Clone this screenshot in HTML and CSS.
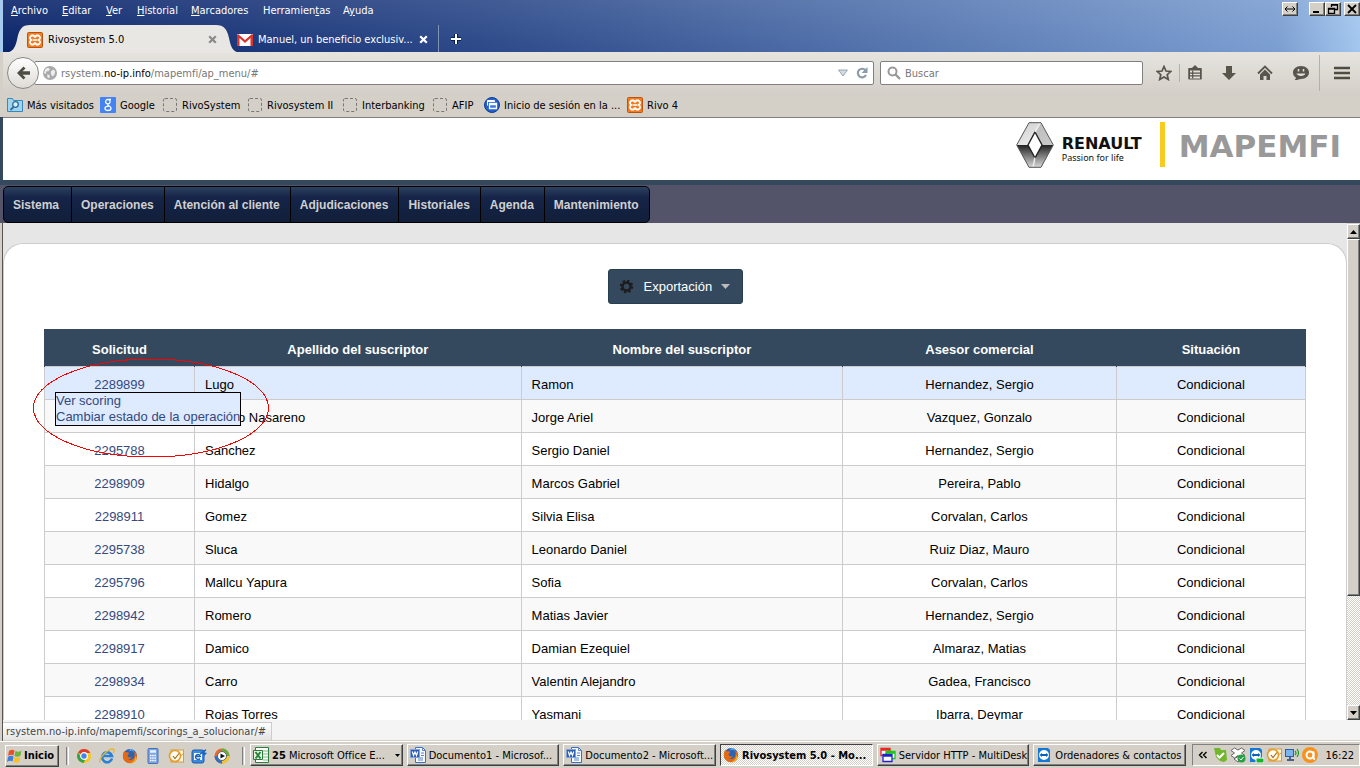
FILE: index.html
```html
<!DOCTYPE html>
<html lang="es">
<head>
<meta charset="utf-8">
<title>Rivosystem 5.0</title>
<link rel="stylesheet" href="styles.css">
</head>
<body>
<svg class="defs" aria-hidden="true">
  <symbol id="xampp" viewBox="0 0 16 16"><rect x=".5" y=".5" width="15" height="15" rx="1" fill="#f57a20" stroke="#b9540f"/><path d="M4.500 3.500h2L8 5l1.500-1.500h2l1.500 1.500v1.500L11.800 8 13 9.500V11l-1.500 1.500h-2L8 11l-1.500 1.500h-2L3 11V9.500L4.200 8 3 6.500V5z" fill="none" stroke="#fff" stroke-width="1.800"/><path d="M5.500 8h5" stroke="#fff" stroke-width="1.600"/></symbol>
  <symbol id="blank" viewBox="0 0 16 16"><rect x="1.500" y="1.500" width="13" height="13" rx="1.500" fill="none" stroke="#777" stroke-dasharray="3 2"/></symbol>
  <symbol id="firefox" viewBox="0 0 16 16"><circle cx="8" cy="8" r="7" fill="#2b63b5"/><path d="M8 1c3 0 4 2 4 3-2-2-4-1-5 0z" fill="#5da8e8"/><path d="M1.500 4 3 3l1 1.500c2-.5 3 .2 3 1L5.500 7.500C6 9.500 8 10 10 9c-1 2-3 3-5 2 3 2 7 1 7.500-3 .5-2 0-3-1-4.500 3 1 4 4 3.300 6.500C14 13.500 11 15.500 8 15.300 3.500 15 .5 11.500.8 7.500z" fill="#e66a12"/><path d="M14.800 10C14 13.500 11 15.500 8 15.300c3-1 5-3 5.500-7z" fill="#f5b51d"/></symbol>
  <symbol id="word" viewBox="0 0 16 16"><path d="M5.500.5h7l3 3v12h-10z" fill="#f4f8ff" stroke="#3f6fb8"/><path d="M12.500.5v3h3M8 11h5M8 13h5M11 6h3M11 8.500h3" fill="none" stroke="#5b86c8"/><rect x=".5" y="2.500" width="9" height="8" fill="#2b5cb0" stroke="#7ea1dd"/><path d="m2.300 4.500 1.200 4 1.500-3.500 1.500 3.500 1.200-4" fill="none" stroke="#fff" stroke-width="1.200"/></symbol>
  <symbol id="outlook" viewBox="0 0 16 16"><rect x="3" y="2" width="12.500" height="12" fill="#fff6d5" stroke="#d39c34"/><path d="m3 6 6 5 6-5" fill="none" stroke="#d9a441"/><circle cx="7" cy="8" r="5.500" fill="#fffdf4" stroke="#e79b2b" stroke-width="1.600"/><path d="m5 8 2 2.500 4-5" fill="none" stroke="#a66c15" stroke-width="1.200"/></symbol>
  <symbol id="viewer" viewBox="0 0 16 16"><path d="M2 1h10l2 2v12H2z" fill="#1478d4"/><circle cx="8" cy="8" r="5" fill="#fff"/><path d="M3.500 8 6 6v1h4V6l2.500 2L10 10V9H6v1z" fill="#0b5fb5"/></symbol>
  <symbol id="closex" viewBox="0 0 9 9"><path d="m1.200 1.200 6.600 6.600m0-6.600L1.200 7.800" stroke="currentColor" stroke-width="2.200"/></symbol>
</svg>
<div class="desktop">
  <div class="window">
    <div class="edge"></div>
    <div class="browser">
      <header class="titlebar">
        <div class="top-row">
          <nav class="menubar">
            <a href="#"><u>A</u>rchivo</a><a href="#"><u>E</u>ditar</a><a href="#"><u>V</u>er</a><a href="#"><u>H</u>istorial</a><a href="#"><u>M</u>arcadores</a><a href="#">Herramien<u>t</u>as</a><a href="#">A<u>y</u>uda</a>
          </nav>
          <div class="controls">
            <button class="bevel ctl first" aria-label="Mover"><svg viewBox="0 0 12 10"><path d="M1 5h10M3.500 2.500 1 5l2.500 2.500m5-5L11 5 8.500 7.500" fill="none" stroke="#000"/></svg></button>
            <button class="bevel ctl" aria-label="Minimizar"><svg viewBox="0 0 12 10"><path d="M2 8h6" stroke="#000" stroke-width="2"/></svg></button>
            <button class="bevel ctl third" aria-label="Restaurar"><svg viewBox="0 0 12 10"><path d="M4.500 3V.5h6v5H8M4 1h7M1.500 4.500h6v5h-6zM1 5h7" fill="none" stroke="#000" stroke-width="1.300"/></svg></button>
            <button class="bevel ctl" aria-label="Cerrar"><svg viewBox="0 0 12 10"><path d="m2 1 8 8m0-8L2 9" stroke="#000" stroke-width="1.800"/></svg></button>
          </div>
        </div>
        <div class="tabs">
          <div class="tab active">
            <svg class="tab-shape" viewBox="0 0 236 28" preserveAspectRatio="none"><path d="M0 28c8-1 10-5 12-13C14 4 17 0 25 0h186c8 0 11 4 13 13 2 10 4 14 12 15z" fill="#e9e7e3"/></svg>
            <svg class="ico"><use href="#xampp"/></svg><span class="tab-name">Rivosystem 5.0</span>
            <button class="tab-close" aria-label="Cerrar pestaña"><svg><use href="#closex"/></svg></button>
          </div>
          <div class="tab">
            <svg class="ico" viewBox="0 0 16 16"><rect y="2" width="16" height="12" rx="1" fill="#fff"/><path d="M0 3v11h2.500V6L8 11l5.500-5v8H16V3l-1-1L8 8 1 2z" fill="#d9342b"/></svg><span class="tab-name">Manuel, un beneficio exclusiv...</span>
            <button class="tab-close" aria-label="Cerrar pestaña"><svg><use href="#closex"/></svg></button>
          </div>
          <button class="newtab" aria-label="Nueva pestaña"><svg viewBox="0 0 12 12"><path d="M6 1v10M1 6h10" stroke="#001c50" stroke-width="4"/><path d="M6 1v10M1 6h10" stroke="#fff" stroke-width="2"/></svg></button>
        </div>
      </header>
      <div class="chrome">
        <div class="toolbar">
          <button class="back" aria-label="Atrás"><svg viewBox="0 0 16 16"><path d="M8.500 1.500 2 8l6.500 6.500 2-2L7.500 9.700H15V6.300H7.500l3-2.800z" fill="#4d4d44"/></svg></button>
          <div class="url">
            <svg class="globe" viewBox="0 0 16 16"><circle cx="8" cy="8" r="8" fill="#a9a9a9"/><path d="m3 3 3-1 2 2-2 2H4l-1 3-2-1zM9 6l3-2 2 2-1 4-2 2-2-3zM5 9l3 2-1 3-2-1z" fill="#eee"/></svg>
            <div class="address" role="textbox" aria-label="Dirección" contenteditable="true">rsystem.<b>no-ip.info</b>/mapemfi/ap_menu/#</div>
            <svg class="drop" viewBox="0 0 10 8"><path d="M.5 1h9L5 7z" fill="#d3dbe0" stroke="#9aa8b3"/></svg>
            <svg class="reload" viewBox="0 0 12 12"><path d="M9.500 3.300A4.300 4.300 0 1 0 10 8" fill="none" stroke="#8d9cab" stroke-width="2.200"/><path d="M11.500 0v6h-6z" fill="#8d9cab"/></svg>
          </div>
          <label class="search"><svg viewBox="0 0 14 14"><circle cx="5.500" cy="5.500" r="4" fill="none" stroke="#999" stroke-width="2"/><path d="m8.500 8.500 4.500 4.500" stroke="#999" stroke-width="2.400"/></svg><input type="text" placeholder="Buscar" aria-label="Buscar"></label>
          <div class="actions">
            <button aria-label="Marcar"><svg viewBox="0 0 16 16"><path d="m8 1.500 2 4.500 4.800.500-3.600 3.200 1.100 4.800L8 12l-4.300 2.500 1.100-4.800L1.200 6.500 6 6z" fill="none" stroke="#56564c" stroke-width="1.700"/></svg></button>
            <span class="sep"></span>
            <button aria-label="Lista"><svg viewBox="0 0 16 16"><path d="M2 3.800h12v10H2zM5.500 3.500 8 1l2.500 2.500z" fill="#56564c" stroke="#56564c" stroke-width="1.500" stroke-linejoin="round"/><path d="M3 5.500h10v8H3z" fill="#e4e1dc"/><path d="M3 8.200h10M3 10.900h10M5.700 5.500v8" stroke="#56564c" stroke-width="1.200"/></svg></button>
            <button aria-label="Descargas"><svg viewBox="0 0 16 16"><path d="M5 1h6v7h4l-7 7-7-7h4z" fill="#56564c"/></svg></button>
            <button aria-label="Inicio"><svg viewBox="0 0 16 16"><path d="m1 8.500 7-7 7 7" fill="none" stroke="#56564c" stroke-width="1.800"/><path d="M3 9.500 8 4.500l5 5V15H9.500v-4h-3v4H3z" fill="#56564c"/></svg></button>
            <button aria-label="Chat"><svg viewBox="0 0 16 16"><path d="M8 1c5 0 8 3 8 6.500S13 14 8 14c-2 0-4 1.500-6.500 1 1-.8 1.500-1.500 1.300-2.500C1 11.500 0 9.500 0 7.500 0 4 3 1 8 1z" fill="#56564c"/><path d="M5.500 4v2.500m5-2.500v2.500" stroke="#e4e1dc" stroke-width="1.500"/><path d="M3.500 8.500h9c-1 3.200-8 3.200-9 0z" fill="#e4e1dc"/></svg></button>
            <span class="sep tall"></span>
            <button aria-label="Menú"><svg viewBox="0 0 16 16"><path d="M0 3h16M0 8h16M0 13h16" stroke="#4d4d42" stroke-width="2.600"/></svg></button>
          </div>
        </div>
        <nav class="bookmarks">
          <a href="#"><svg viewBox="0 0 16 16"><path d="M.5 1.500h5l1 2h9v11H.5z" fill="#9fd4f0" stroke="#3989b8"/><circle cx="8.500" cy="7.500" r="2.800" fill="#d8f0fc" stroke="#2f6c96" stroke-width="1.300"/><path d="m6.500 10-3 3" stroke="#2f6c96" stroke-width="1.800"/></svg>Más visitados</a>
          <a href="#"><svg viewBox="0 0 16 16"><rect width="16" height="16" rx="1" fill="#4583f2"/><path d="M11 2.500H7.800a2.200 2.200 0 1 0 0 4.400A2.200 2.200 0 0 0 9 2.800M8 7c-1.500 1.500 3 1.800 3 4.200 0 3-6 3-6 .2 0-1.800 2-2.200 3.800-2.200" fill="none" stroke="#fff" stroke-width="1.300"/></svg>Google</a>
          <a href="#"><svg><use href="#blank"/></svg>RivoSystem</a>
          <a href="#"><svg><use href="#blank"/></svg>Rivosystem II</a>
          <a href="#"><svg><use href="#blank"/></svg>Interbanking</a>
          <a href="#"><svg><use href="#blank"/></svg>AFIP</a>
          <a href="#"><svg viewBox="0 0 16 16"><circle cx="8" cy="8" r="7.500" fill="#2161cf" stroke="#123d91"/><path d="M3.500 8.500v-5h7v1.500M3.500 4.500h7" fill="none" stroke="#fff"/><path d="M5.500 6.500h7v5h-7zM5.500 7.500h7" fill="#3b78db" stroke="#fff" stroke-width="1.300"/></svg>Inicio de sesión en la ...</a>
          <a href="#"><svg><use href="#xampp"/></svg>Rivo 4</a>
        </nav>
      </div>
      <div class="brand">
        <svg class="renault" viewBox="0 0 38 46">
          <defs>
            <linearGradient id="lower" x2="0" y2="1"><stop offset="0" stop-color="#222"/><stop offset="1" stop-color="#d8d8d8"/></linearGradient>
            <linearGradient id="upper" x2="1" y2="1"><stop offset="0" stop-color="#ccc"/><stop offset="1" stop-color="#fafafa"/></linearGradient>
          </defs>
          <path d="M13 .7h12L37.300 23H.7z" fill="url(#upper)"/>
          <path d="M.7 23h36.600L25 45.300H13z" fill="url(#lower)"/>
          <path d="m25 1 12 22H26l-6.500-12z" fill="#aaa" opacity=".6"/>
          <path d="m19 10 7 13-7 13-7-13z" fill="#fff" stroke="#222" stroke-width="1.400"/>
          <path d="M19 35.500 17 45m2-35 5-9" stroke="#eee" stroke-width="1.400"/>
          <path d="M13 .7h12L37.300 23 25 45.300H13L.7 23z" fill="none" stroke="#555"/>
        </svg>
        <div class="renault-text"><strong>RENAULT</strong><span>Passion for life</span></div>
        <div class="rule"></div>
        <div class="mapemfi">MAPEMFI</div>
      </div>
      <div class="mainnav"><nav><a href="#">Sistema</a><a href="#">Operaciones</a><a href="#">Atención al cliente</a><a href="#">Adjudicaciones</a><a href="#">Historiales</a><a href="#">Agenda</a><a href="#">Mantenimiento</a></nav></div>
      <div class="content">
        <main class="panel">
          <button class="export"><svg class="gear" viewBox="0 0 16 16"><circle cx="8" cy="8" r="4.300" fill="none" stroke="#1c1c1c" stroke-width="2.600"/><circle cx="8" cy="8" r="6.200" fill="none" stroke="#1c1c1c" stroke-width="2" stroke-dasharray="2.400 2.470"/></svg>Exportación<svg class="caret" viewBox="0 0 9 5"><path d="M0 0h9L4.500 5z" fill="#bbb"/></svg></button>
          <table>
            <colgroup><col class="c1"><col class="c2"><col class="c3"><col class="c4"><col class="c5"></colgroup>
            <thead><tr><th>Solicitud</th><th>Apellido del suscriptor</th><th>Nombre del suscriptor</th><th>Asesor comercial</th><th>Situación</th></tr></thead>
            <tbody>
              <tr class="selected"><td><div class="anchor"><a href="#">2289899</a><div class="popup"><a href="#">Ver scoring</a><a href="#">Cambiar estado de la operación</a></div><svg class="mark" viewBox="0 0 236 100"><ellipse cx="118" cy="50" rx="117.500" ry="49" fill="none" stroke="#f00" shape-rendering="crispEdges"/></svg></div></td><td>Lugo</td><td>Ramon</td><td>Hernandez, Sergio</td><td>Condicional</td></tr>
              <tr><td></td><td class="covered">o Nasareno</td><td>Jorge Ariel</td><td>Vazquez, Gonzalo</td><td>Condicional</td></tr>
              <tr><td><a href="#">2295788</a></td><td>Sanchez</td><td>Sergio Daniel</td><td>Hernandez, Sergio</td><td>Condicional</td></tr>
              <tr><td><a href="#">2298909</a></td><td>Hidalgo</td><td>Marcos Gabriel</td><td>Pereira, Pablo</td><td>Condicional</td></tr>
              <tr><td><a href="#">2298911</a></td><td>Gomez</td><td>Silvia Elisa</td><td>Corvalan, Carlos</td><td>Condicional</td></tr>
              <tr><td><a href="#">2295738</a></td><td>Sluca</td><td>Leonardo Daniel</td><td>Ruiz Diaz, Mauro</td><td>Condicional</td></tr>
              <tr><td><a href="#">2295796</a></td><td>Mallcu Yapura</td><td>Sofia</td><td>Corvalan, Carlos</td><td>Condicional</td></tr>
              <tr><td><a href="#">2298942</a></td><td>Romero</td><td>Matias Javier</td><td>Hernandez, Sergio</td><td>Condicional</td></tr>
              <tr><td><a href="#">2298917</a></td><td>Damico</td><td>Damian Ezequiel</td><td>Almaraz, Matias</td><td>Condicional</td></tr>
              <tr><td><a href="#">2298934</a></td><td>Carro</td><td>Valentin Alejandro</td><td>Gadea, Francisco</td><td>Condicional</td></tr>
              <tr><td><a href="#">2298910</a></td><td>Rojas Torres</td><td>Yasmani</td><td>Ibarra, Deymar</td><td>Condicional</td></tr>
            </tbody>
          </table>
        </main>
        <div class="scrollbar">
          <button class="bevel" aria-label="Subir"><svg viewBox="0 0 7 4"><path d="M0 4h7L3.500 0z"/></svg></button>
          <div class="bevel thumb"></div>
          <div class="track"></div>
          <button class="bevel" aria-label="Bajar"><svg viewBox="0 0 7 4"><path d="M0 0h7L3.500 4z"/></svg></button>
        </div>
      </div>
      <div class="statusbar"><span>rsystem.no-ip.info/mapemfi/scorings_a_solucionar/#</span></div>
    </div>
  </div>
  <footer class="taskbar">
    <div class="launch">
      <button class="bevel start"><svg viewBox="0 0 16 16"><path d="M2 3c2-1.500 4-1.500 5.500-.5L6.500 7.500C5 6.500 3 6.500 1 8z" fill="#e8502a"/><path d="M8.500 3c2 1 4 1 6-.5L13.500 7.500c-2 1.500-4 1.500-6 .5z" fill="#6db33f"/><path d="M1 9c2-1.500 4-1.500 5.500-.5l-1 5C4 12.500 2 12.500 0 14z" fill="#3c7fdd"/><path d="M7.500 9c2 1 4 1 6-.5l-1 5c-2 1.500-4 1.500-6 .5z" fill="#f6c02c"/></svg>Inicio</button>
      <span class="divider"></span>
      <div class="quick">
        <button aria-label="Chrome"><svg viewBox="0 0 16 16"><circle cx="8" cy="8" r="7" fill="#fbc71a"/><path d="M8 8 2 4.500A7 7 0 0 1 14.300 5H8z" fill="#dd3e31"/><path d="M2 4.500A7 7 0 0 0 7.500 15L10 10 5 9z" fill="#35a14c"/><circle cx="8" cy="8" r="3.300" fill="#4384ee" stroke="#fff" stroke-width="1.200"/></svg></button>
        <button aria-label="Internet Explorer"><svg viewBox="0 0 16 16"><path d="M13 10.500A5 5 0 1 1 13 8H4" fill="none" stroke="#2582d8" stroke-width="2.600"/><path d="M1 14.500C-1 11 8 1 14 1c2 .5 1 3 0 4" fill="none" stroke="#e8b535" stroke-width="1.300"/></svg></button>
        <button aria-label="Firefox"><svg><use href="#firefox"/></svg></button>
        <button aria-label="Calculadora"><svg viewBox="0 0 16 16"><rect x="3" y=".5" width="10" height="15" rx="1" fill="#7da5e0" stroke="#4571b5"/><path d="M5 3.500h6" stroke="#e5f3ff" stroke-width="2.500"/><path d="M5 7.500h6M5 10h6M5 12.500h6" stroke="#fff" stroke-width="1.500" stroke-dasharray="1.500 .7"/></svg></button>
        <button aria-label="Outlook"><svg><use href="#outlook"/></svg></button>
        <button aria-label="Outlook Express"><svg viewBox="0 0 16 16"><rect x="1" y="2" width="12" height="13" rx="2" fill="#3a8ade" stroke="#1b5cab"/><path d="M3 5h8v7H3z" fill="#fff"/><path d="M9 7.500a2.500 2.500 0 1 0 0 3M5 8.500h5M9 6c3-1 3-3 6-4" fill="none" stroke="#1762bc" stroke-width="1.400"/><path d="m12 4 4 1-3 3z" fill="#1762bc"/></svg></button>
        <button aria-label="Media Player"><svg viewBox="0 0 16 16"><circle cx="8" cy="8" r="7.500" fill="#e9682a"/><path d="M8 .5A7.500 7.500 0 0 1 15.500 8H8z" fill="#6cab3a"/><path d="M15.500 8A7.500 7.500 0 0 1 8 15.500V8z" fill="#f4c72c"/><path d="M8 15.500A7.500 7.500 0 0 1 .5 8H8z" fill="#326fc2"/><circle cx="8" cy="8" r="4.500" fill="#fff" stroke="#567"/><path d="M6.500 5.500v5L11 8z" fill="#111"/></svg></button>
      </div>
      <span class="divider last"></span>
    </div>
    <div class="tasks">
      <button class="bevel task"><svg viewBox="0 0 16 16"><path d="M2.500.5h13v15h-13z" fill="#fff" stroke="#2c7d3b"/><path d="M10 4h5M10 7h5M10 10h5M10 13h5" stroke="#77b57f"/><path d="M.5 3.500h9v9h-9z" fill="#e8f5e5" stroke="#2c7d3b"/><path d="m2.500 5 5 6.500m0-6.500-5 6.500" stroke="#26833a" stroke-width="2"/></svg><span><b>25</b> Microsoft Office E...</span><svg class="more" viewBox="0 0 5 3"><path d="M0 0h5L2.500 3z"/></svg></button>
      <button class="bevel task"><svg><use href="#word"/></svg><span>Documento1 - Microsof...</span></button>
      <button class="bevel task"><svg><use href="#word"/></svg><span>Documento2 - Microsoft...</span></button>
      <button class="bevel task pressed"><svg><use href="#firefox"/></svg><span>Rivosystem 5.0 - Mo...</span></button>
      <button class="bevel task"><svg viewBox="0 0 16 16"><path d="M1 1.500h9v7H1zM1 3h9" fill="#fff" stroke="#e22" stroke-width="1.300"/><path d="M6 4.500h9v7H6zM6 6h9" fill="#fff" stroke="#1c1" stroke-width="1.300"/><path d="M3 7.500h9v7H3zM3 9h9" fill="#fff" stroke="#22c" stroke-width="1.300"/></svg><span>Servidor HTTP - MultiDesk</span></button>
      <button class="bevel task"><svg><use href="#viewer"/></svg><span>Ordenadores &amp; contactos</span></button>
    </div>
    <div class="tray">
      <svg class="chev" viewBox="0 0 10 8"><path d="M4.500 1 1.500 4l3 3M8.500 1l-3 3 3 3" fill="none" stroke="#000" stroke-width="1.400"/></svg>
      <svg viewBox="0 0 16 16"><path d="M2 1h6l1 2h5l1 10-3 2-4-1-4-4z" fill="#72b62c"/><path d="m5 8 2.500 2.500L12 6" fill="none" stroke="#fff" stroke-width="2"/></svg>
      <svg viewBox="0 0 16 16"><path d="m4.500 1 3.500 2 3.500-2L15 3.500 11.500 6 15 8.500 11.500 11 8 8.500 4.500 11 1 8.500 4.500 6 1 3.500zM4 12l4-2.500 4 2.500-4 3z" fill="#fff" stroke="#666"/><circle cx="11.500" cy="11.500" r="4" fill="#27a044"/><path d="m9.500 11.500 1.500 1.500 2.500-3" fill="none" stroke="#fff"/></svg>
      <svg viewBox="0 0 16 16"><use href="#viewer"/><rect x="8" y="11" width="8" height="5" rx="1" fill="#18b52c" stroke="#fff"/></svg>
      <svg><use href="#outlook"/></svg>
      <svg viewBox="0 0 16 16"><rect x="1.500" y="2.500" width="8" height="7" fill="#7bb5ec" stroke="#2b5fa5"/><path d="M3 13h7M6 10v3" stroke="#46608a" stroke-width="2"/><path d="M11 4q2 2 0 4m2-6q3 4 0 8" fill="none" stroke="#199c1d" stroke-width="1.200"/></svg>
      <svg viewBox="0 0 16 16"><circle cx="8" cy="8" r="8" fill="#f7921e"/><circle cx="8" cy="8" r="3.500" fill="none" stroke="#fff" stroke-width="2"/><path d="M11.500 4.500V11q0 1 1.500 1" fill="none" stroke="#fff" stroke-width="2"/></svg>
      <time>16:22</time>
    </div>
  </footer>
</div>
</body>
</html>
```

FILE: styles.css
```css
* { box-sizing: border-box; }
body { margin: 0; font-family: "DejaVu Sans Condensed", "DejaVu Sans", sans-serif; font-size: 11px; color: #000; }
a { color: inherit; text-decoration: none; }
button { font: inherit; color: inherit; padding: 0; border: 0; background: none; }
svg { display: block; flex: none; }
.defs { position: absolute; width: 0; height: 0; }

.desktop { display: flex; flex-direction: column; height: 100vh; overflow: hidden; background: #d4d0c8; }
.window { display: flex; flex: 1; min-height: 0; }
.edge { width: 3px; background: linear-gradient(#a6caf0 0 52px, #d4d0c8 52px 117px, #34495e 117px 185px, #53546a 185px 223px, transparent 223px), linear-gradient(to right, #d4d0c8 2px, #555 2px); }
.browser { flex: 1; min-width: 0; display: flex; flex-direction: column; }
.bevel { background: #d4d0c8; border: 1px solid; border-color: #fff #404040 #404040 #fff; box-shadow: inset -1px -1px #808080; }

.titlebar { height: 52px; flex: none; color: #fff; background: linear-gradient(rgba(255, 255, 255, .1), transparent), linear-gradient(to right, #0a246a, #2b4888 35%, #5272ac 64%, #7b9ed1 94%, #a2c6ee); }
.top-row { display: flex; justify-content: space-between; height: 25px; }
.menubar { display: grid; grid-template-columns: 51px 44px 31px 54px 72px 80px auto; padding: 4px 0 0 8px; line-height: 14px; white-space: nowrap; }
.controls { display: flex; padding-top: 2px; }
.ctl { width: 16px; height: 14px; display: flex; align-items: center; justify-content: center; }
.ctl svg { width: 12px; height: 10px; }
.ctl.first { margin-right: 11px; }
.ctl.third { margin-right: 3px; }
.tabs { display: flex; padding-left: 2px; height: 27px; }
.tab { position: relative; display: flex; align-items: center; gap: 5px; width: 201px; padding: 2px 10px 0 0; white-space: nowrap; }
.tab.active { width: 232px; padding: 2px 22px 0; color: #000; }
.tab-shape { position: absolute; left: 0; top: 0; width: 236px; height: 28px; }
.ico { position: relative; width: 16px; height: 16px; }
.tab-name { position: relative; flex: 1; }
.tab-close { position: relative; color: #fff; }
.active .tab-close { color: #8a8a8a; margin-right: -2px; }
.tab-close svg { width: 9px; height: 9px; }
.newtab { border-left: 1px solid #8192b5; padding-left: 11px; }
.newtab svg { width: 12px; height: 12px; }

.chrome { height: 66px; flex: none; border-bottom: 1px solid #808080; background: linear-gradient(#e6e4df, #d4d0c8 42px); }
.toolbar { display: flex; align-items: center; height: 42px; padding-left: 4px; }
.back { position: relative; z-index: 1; width: 32px; height: 32px; border: 1px solid #888; border-radius: 50%; background: linear-gradient(#fff, #dedbd5); display: flex; align-items: center; justify-content: center; }
.back svg { width: 16px; height: 16px; }
.url, .search { display: flex; align-items: center; height: 24px; border: 1px solid #808080; border-radius: 2px; background: #fff; }
.url { flex: 1; margin-left: -5px; padding: 0 5px 0 8px; gap: 4px; color: #777; }
.url b { font-weight: normal; color: #000; }
.address { flex: 1; }
.globe { width: 14px; height: 14px; }
.drop { width: 10px; height: 8px; margin-right: 4px; }
.reload { width: 12px; height: 12px; }
.search { width: 263px; margin-left: 6px; padding: 0 6px; gap: 4px; }
.search svg { width: 14px; height: 14px; }
.search input { font: inherit; border: 0; outline: 0; padding: 0; flex: 1; min-width: 0; background: none; }
.search input::placeholder { color: #777; opacity: 1; }
.actions { display: grid; grid-template-columns: 30px 1px 30px 37px 36px 36px 4px 37px; align-items: center; padding-left: 6px; }
.actions button { justify-self: center; }
.actions svg { width: 16px; height: 16px; }
.sep { width: 1px; height: 18px; background: #aab3ba; }
.sep.tall { height: 36px; }
.bookmarks { display: grid; grid-template-columns: 93px 62px 85px 95px 90px 52px 143px auto; padding-left: 4px; height: 22px; align-items: center; white-space: nowrap; }
.bookmarks a { display: flex; align-items: center; gap: 4px; }
.bookmarks svg { width: 16px; height: 16px; }

.brand { height: 67px; flex: none; display: flex; justify-content: flex-end; align-items: flex-start; padding: 4px 19px 0 0; background: #fff; border-bottom: 5px solid #34495e; }
.renault { width: 38px; height: 46px; }
.renault-text { display: flex; flex-direction: column; margin: 13px 18px 0 8px; color: #111; }
.renault-text strong { font: bold 16px/18px "DejaVu Sans", sans-serif; }
.renault-text span { font: 9px/10px "Noto Sans", sans-serif; }
.rule { width: 5px; height: 45px; background: #f8cc1e; margin-right: 14px; }
.mapemfi { font: bold 31px/49px "DejaVu Sans", sans-serif; color: #999; }

.mainnav { flex: none; padding-top: 1px; background: #53546a; }
.mainnav nav { display: inline-flex; vertical-align: top; border: 1px solid #000; border-radius: 5px; overflow: hidden; background: linear-gradient(#2e415f, #152448 30%, #111f3a); }
.mainnav a { padding: 1px 10px 0 9px; font: bold 12px/34px "Liberation Sans", sans-serif; color: #d0d0d0; border-left: 1px solid #000; }
.mainnav a:first-child { border-left: 0; padding-right: 12px; }

.content { flex: 1; min-height: 0; display: flex; overflow: hidden; background: #e6e6e6; }
.panel { flex: 1; margin-top: 20px; padding: 25px 40px 0; background: #fff; border: 1px solid #ccc; border-bottom: 0; border-radius: 20px 20px 0 0; font-family: "Liberation Sans", sans-serif; font-size: 13px; }
.export { display: flex; align-items: center; width: 135px; height: 35px; margin: 0 auto 25px; padding: 0 12px 0 10px; color: #fff; background: #34495e; border: 1px solid #26404f; border-radius: 3px; }
.gear { width: 15px; height: 15px; margin-right: 10px; }
.caret { width: 9px; height: 5px; margin-left: auto; }
table { width: 100%; table-layout: fixed; border-collapse: collapse; }
.c1 { width: 150px; }
.c2 { width: 25.9%; }
.c3 { width: 25.5%; }
.c4 { width: 21.7%; }
th { height: 37px; padding: 2px 0 0; background: #34495e; color: #fff; border: 1px solid #34495e; border-bottom: 0; }
td { height: 33px; padding: 2px 10px 0; border: 1px solid #ccc; }
td:first-child, td:nth-child(n+4) { text-align: center; }
td a { color: #34497e; }
tbody tr:nth-child(even) { background: #f9f9f9; }
tbody tr.selected { background: #deeafe; }
.covered { padding-left: 43px; }
.anchor { position: relative; }
.popup { position: absolute; left: 0; top: 15px; z-index: 1; display: flex; flex-direction: column; width: 186px; text-align: left; line-height: 16px; white-space: nowrap; background: #deeafe; border: 1px solid #000; }
.mark { position: absolute; left: -22px; top: -19px; z-index: 2; width: 236px; height: 100px; pointer-events: none; }
.scrollbar { width: 13px; display: flex; flex-direction: column; background: #d4d0c8; padding: 1px 0 0; }
.scrollbar button { height: 15px; display: flex; align-items: center; justify-content: center; }
.scrollbar button svg { width: 7px; height: 4px; }
.thumb { flex: 13; }
.track { flex: 4; background: repeating-conic-gradient(#fff 0 25%, #d4d0c8 0 50%) 0 0 / 2px 2px; }
.statusbar { height: 21px; flex: none; display: flex; align-items: flex-end; background: #f4f4f4; border-bottom: 1px solid #d4d0c8; }
.statusbar span { padding: 1px 5px 0 3px; line-height: 16px; color: #444; background: linear-gradient(#fff, #e4e4e4); border: 1px solid #ccc; border-left: 0; border-bottom: 0; }

.taskbar { flex: none; display: flex; height: 27px; padding: 2px 0 1px 5px; border-top: 1px solid #fff; }
.launch { flex: none; width: 245px; display: flex; align-items: center; }
.start { display: flex; align-items: center; gap: 1px; width: 54px; height: 22px; padding-left: 1px; font-weight: bold; }
.launch svg, .task svg, .tray svg { width: 16px; height: 16px; }
.divider { width: 3px; height: 18px; margin-left: 7px; border-left: 1px solid #808080; border-right: 1px solid #fff; }
.quick { display: flex; gap: 7px; margin-left: 7px; }
.divider.last { margin-left: 12px; }
.tasks { flex: 1; min-width: 0; display: flex; gap: 4px; }
.task { flex: 1; min-width: 0; display: flex; align-items: center; gap: 3px; height: 22px; padding: 0 2px; white-space: nowrap; overflow: hidden; }
.task svg.more { width: 5px; height: 3px; margin-left: auto; }
.task.pressed { font-weight: bold; border-color: #404040 #fff #fff #404040; box-shadow: none; background: repeating-conic-gradient(#fff 0 25%, #d4d0c8 0 50%) 0 0 / 2px 2px; }
.tray { flex: none; width: 168px; height: 22px; margin-left: 6px; padding: 0 5px; display: flex; align-items: center; gap: 2px; border: 1px solid; border-color: #808080 #fff #fff #808080; }
.tray svg.chev { width: 10px; height: 8px; margin-right: 2px; }
.tray time { margin-left: auto; }
```
